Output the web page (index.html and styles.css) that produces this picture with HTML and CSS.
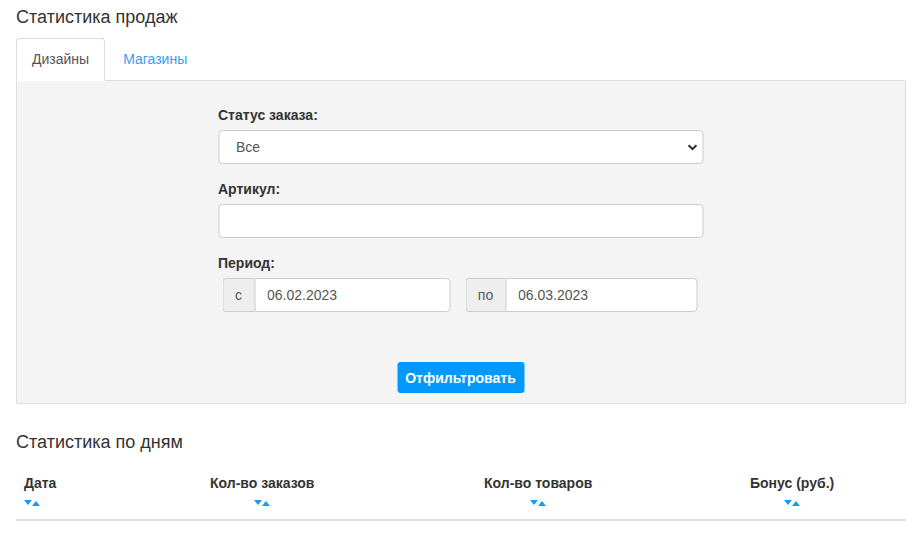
FILE: index.html
```html
<!DOCTYPE html>
<html lang="ru">
<head>
<meta charset="utf-8">
<title>Статистика продаж</title>
<link rel="stylesheet" href="styles.css">
</head>
<body>
<div class="page">
  <h1 class="title">Статистика продаж</h1>
  <ul class="tabs">
    <li class="tab active">Дизайны</li>
    <li class="tab">Магазины</li>
  </ul>
  <div class="panel">
    <form class="filter">
      <label class="label">Статус заказа:</label>
      <div class="select-wrap">
        <select class="control select"><option>Все</option></select>
        <svg class="chevron" width="10" height="7" viewBox="0 0 10 7"><path d="M1 1.2 L5 5 L9 1.2" fill="none" stroke="#333" stroke-width="2"/></svg>
      </div>
      <label class="label">Артикул:</label>
      <input class="control" type="text">
      <label class="label">Период:</label>
      <div class="period">
        <div class="group g1"><span class="addon a1">с</span><input class="gi" type="text" value="06.02.2023"></div>
        <div class="group g2"><span class="addon a2">по</span><input class="gi" type="text" value="06.03.2023"></div>
      </div>
      <div class="actions"><button type="button" class="btn">Отфильтровать</button></div>
    </form>
  </div>
  <h2 class="subtitle">Статистика по дням</h2>
  <div class="table-head">
    <div class="th left"><span>Дата</span><span class="sort"><i class="down"></i><i class="up"></i></span></div>
    <div class="th"><span>Кол-во заказов</span><span class="sort"><i class="down"></i><i class="up"></i></span></div>
    <div class="th"><span>Кол-во товаров</span><span class="sort"><i class="down"></i><i class="up"></i></span></div>
    <div class="th"><span>Бонус (руб.)</span><span class="sort"><i class="down"></i><i class="up"></i></span></div>
  </div>
</div>
</body>
</html>
```

FILE: styles.css
```css
* { box-sizing: border-box; }
html, body { margin: 0; padding: 0; background: #fff; }
body { font-family: "Liberation Sans", Arial, sans-serif; font-size: 14px; color: #333; }
.page { padding: 0 6px 0 16px; }
.title { margin: 0; padding-top: 7px; font-size: 18px; font-weight: normal; line-height: 20px; color: #333; }
.tabs { list-style: none; margin: 11px 0 0; padding: 0; display: flex; }
.tab { padding: 10px 15px; line-height: 20px; border: 1px solid transparent; margin-right: 2px; color: #3d9bf7; border-radius: 4px 4px 0 0; font-size: 14px; }
.tab.active { background: #fff; border-color: #ddd; border-bottom-color: #fff; color: #555; margin-bottom: -1px; position: relative; z-index: 1; }
.panel { border: 1px solid #ddd; background: #f4f4f4; padding: 25px 0 10px; border-radius: 0 2px 2px 2px; }
.filter { width: 485px; margin: 0 auto; display: flex; flex-direction: column; transform: translateX(-0.5px); }
.label { font-weight: bold; line-height: 18px; margin-bottom: 6px; color: #333; }
.control { height: 34px; width: 100%; border: 1px solid #ccc; border-radius: 4px; background: #fff; font-family: inherit; font-size: 14px; color: #555; padding: 0 12px; margin-bottom: 16px; outline: none; }
.select-wrap { position: relative; }
.select { appearance: none; -webkit-appearance: none; padding-left: 17px; }
.chevron { position: absolute; right: 6px; top: 14px; }
.period { display: flex; gap: 15px; padding-left: 4px; }
.group { display: flex; height: 34px; }
.g1 { width: 228px; }
.g2 { width: 232px; }
.addon { display: flex; align-items: center; justify-content: center; background: #eee; border: 1px solid #ccc; border-right: none; border-radius: 4px 0 0 4px; color: #555; }
.a1 { width: 32px; }
.a2 { width: 40px; }
.gi { flex: 1; min-width: 0; border: 1px solid #ccc; border-radius: 0 4px 4px 0; background: #fff; font-family: inherit; font-size: 14px; color: #555; padding: 0 12px; outline: none; }
.actions { display: flex; justify-content: center; margin-top: 50px; }
.btn { width: 127px; height: 31px; border: none; border-radius: 3px; background: #0299fd; color: #fff; font-family: inherit; font-weight: bold; font-size: 14px; padding: 0; }
.subtitle { margin: 28px 0 0; font-size: 18px; font-weight: normal; line-height: 20px; color: #333; }
.table-head { display: grid; grid-template-columns: 186px 274px 266px 163px; margin-top: 14px; border-bottom: 2px solid #ddd; }
.th { padding: 8px 8px 13px; display: flex; flex-direction: column; align-items: flex-start; font-weight: bold; line-height: 18px; }
.th:not(.left) { display: grid; justify-content: start; justify-items: center; }
.sort { display: flex; align-items: flex-start; margin-top: 8px; height: 6px; }
.sort i { display: block; width: 0; height: 0; border-left: 4px solid transparent; border-right: 4px solid transparent; }
.down { border-top: 5px solid #1a9af5; }
.up { border-bottom: 5px solid #1a9af5; margin-top: 1px; }
```
